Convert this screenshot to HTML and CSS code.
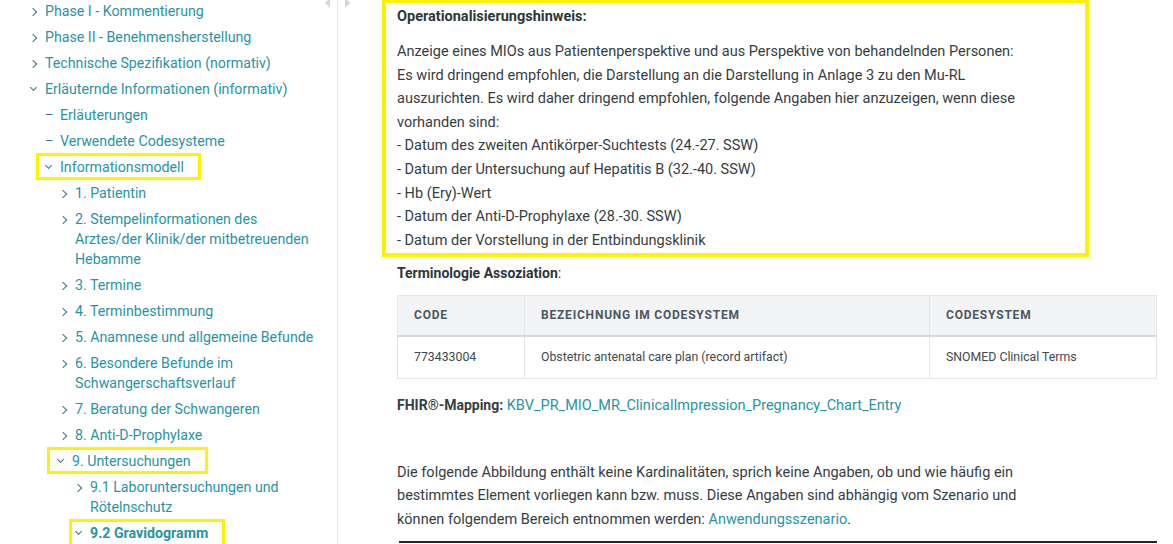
FILE: index.html
```html
<!DOCTYPE html>
<html lang="de">
<head>
    <meta charset="UTF-8">
    <meta name="viewport" content="width=device-width, initial-scale=1.0">
    <title>Gravidogramm</title>
    <link rel="stylesheet" href="styles.css">
</head>
<body>
    <aside class="sidebar">
        <span class="toggle toggle-left"></span>
        <span class="toggle toggle-right"></span>
        <ul class="tree">
            <li><div class="row"><span class="ico chev"></span><a href="#">Phase I - Kommentierung</a></div></li>
            <li><div class="row"><span class="ico chev"></span><a href="#">Phase II - Benehmensherstellung</a></div></li>
            <li><div class="row"><span class="ico chev"></span><a href="#">Technische Spezifikation (normativ)</a></div></li>
            <li>
                <div class="row"><span class="ico chev open"></span><a href="#">Erläuternde Informationen (informativ)</a></div>
                <ul>
                    <li><div class="row"><span class="ico dash">–</span><a href="#">Erläuterungen</a></div></li>
                    <li><div class="row"><span class="ico dash">–</span><a href="#">Verwendete Codesysteme</a></div></li>
                    <li>
                        <div class="row"><span class="mark mark-1"><span class="ico chev open"></span><a href="#">Informationsmodell</a></span></div>
                        <ul>
                            <li><div class="row"><span class="ico chev"></span><a href="#">1. Patientin</a></div></li>
                            <li><div class="row"><span class="ico chev"></span><a href="#">2. Stempelinformationen des Arztes/der Klinik/der mitbetreuenden Hebamme</a></div></li>
                            <li><div class="row"><span class="ico chev"></span><a href="#">3. Termine</a></div></li>
                            <li><div class="row"><span class="ico chev"></span><a href="#">4. Terminbestimmung</a></div></li>
                            <li><div class="row"><span class="ico chev"></span><a href="#">5. Anamnese und allgemeine Befunde</a></div></li>
                            <li><div class="row"><span class="ico chev"></span><a href="#">6. Besondere Befunde im Schwangerschaftsverlauf</a></div></li>
                            <li><div class="row"><span class="ico chev"></span><a href="#">7. Beratung der Schwangeren</a></div></li>
                            <li><div class="row"><span class="ico chev"></span><a href="#">8. Anti-D-Prophylaxe</a></div></li>
                            <li>
                                <div class="row"><span class="mark mark-2"><span class="ico chev open"></span><a href="#">9. Untersuchungen</a></span></div>
                                <ul>
                                    <li><div class="row"><span class="ico chev"></span><a href="#">9.1 Laboruntersuchungen und Rötelnschutz</a></div></li>
                                    <li><div class="row"><span class="mark mark-3"><span class="ico chev open"></span><a href="#" class="current">9.2 Gravidogramm</a></span></div></li>
                                </ul>
                            </li>
                        </ul>
                    </li>
                </ul>
            </li>
        </ul>
    </aside>
    <main class="content">
        <div class="note">
            <p class="note-title">Operationalisierungshinweis:</p>
            <p>Anzeige eines MIOs aus Patientenperspektive und aus Perspektive von behandelnden Personen:<br>
            Es wird dringend empfohlen, die Darstellung an die Darstellung in Anlage 3 zu den Mu-RL auszurichten. Es wird daher dringend empfohlen, folgende Angaben hier anzuzeigen, wenn diese vorhanden sind:<br>
            - Datum des zweiten Antikörper-Suchtests (24.-27. SSW)<br>
            - Datum der Untersuchung auf Hepatitis B (32.-40. SSW)<br>
            - Hb (Ery)-Wert<br>
            - Datum der Anti-D-Prophylaxe (28.-30. SSW)<br>
            - Datum der Vorstellung in der Entbindungsklinik</p>
        </div>
        <p class="label"><strong>Terminologie Assoziation</strong>:</p>
        <table class="codes">
            <thead>
                <tr>
                    <th class="col-code">Code</th>
                    <th class="col-name">Bezeichnung im Codesystem</th>
                    <th>Codesystem</th>
                </tr>
            </thead>
            <tbody>
                <tr>
                    <td>773433004</td>
                    <td>Obstetric antenatal care plan (record artifact)</td>
                    <td>SNOMED Clinical Terms</td>
                </tr>
            </tbody>
        </table>
        <p class="mapping"><strong>FHIR®-Mapping:</strong> <a href="#">KBV_PR_MIO_MR_ClinicalImpression_Pregnancy_Chart_Entry</a></p>
        <p class="intro">Die folgende Abbildung enthält keine Kardinalitäten, sprich keine Angaben, ob und wie häufig ein bestimmtes Element vorliegen kann bzw. muss. Diese Angaben sind abhängig vom Szenario und können folgendem Bereich entnommen werden: <a href="#">Anwendungsszenario</a>.</p>
        <div class="figure"></div>
    </main>
</body>
</html>
```

FILE: styles.css
```css
body {
    margin: 0;
    display: flex;
    height: 544px;
    overflow: hidden;
    font-family: Roboto, 'Open Sans', sans-serif;
    font-size: 14.5px;
    color: #363d42;
    background: #fff;
}
a {
    color: #2894a4;
    text-decoration: none;
}
strong {
    font-size: 14px;
}
.sidebar {
    position: relative;
    width: 337px;
    flex-shrink: 0;
    border-right: 1px solid #e3e3e3;
    font-size: 14.2px;
}
.toggle {
    position: absolute;
    top: -2px;
    width: 0;
    height: 0;
    border-top: 5px solid transparent;
    border-bottom: 5px solid transparent;
}
.toggle-left {
    right: 7px;
    border-right: 5px solid #d6d6d6;
}
.toggle-right {
    right: -13px;
    border-left: 5px solid #d6d6d6;
}
.tree, .tree ul {
    list-style: none;
    margin: 0;
    padding: 0;
}
.tree {
    padding: 1px 0 0 30px;
}
.tree ul {
    padding-left: 15px;
    margin-top: 6px;
}
.tree li {
    margin-bottom: 6px;
}
.tree li:last-child {
    margin-bottom: 0;
}
.row {
    display: flex;
    line-height: 20px;
    padding-right: 14px;
}
.ico {
    flex: 0 0 15px;
    color: #3a7682;
}
.chev::before {
    content: "";
    display: inline-block;
    width: 5px;
    height: 5px;
    border-right: 1.6px solid #3a7682;
    border-bottom: 1.6px solid #3a7682;
    transform: rotate(-45deg);
    margin: 0 0 1px 0;
}
.chev.open::before {
    width: 4px;
    height: 4px;
    transform: rotate(45deg);
    margin: 0 0 4px 1px;
}
.dash {
    font-size: 13px;
}
.mark {
    display: inline-flex;
    border: 3px solid #fff200;
    margin: -4px 0 -3px -9px;
    padding: 1px 14px 0 6px;
}
.mark-2 {
    margin-left: -13px;
    padding-left: 7px;
}
.mark-3 {
    margin: -4px 0 -7px -6px;
    padding: 1px 14px 4px 3px;
}
.current {
    font-weight: 700;
}
.content {
    flex: 1;
    padding: 0 16px 0 59px;
}
.content p {
    margin: 0;
    line-height: 23.6px;
}
.note {
    width: 640px;
    margin: -1px 0 0 -15px;
    padding: 2px 48px 1px 11px;
    border: 4px solid #fff200;
}
.note .note-title {
    font-weight: 700;
    line-height: 24px;
    margin-bottom: 11px;
    color: #2f363b;
}
.content .label {
    margin-top: 5px;
    color: #2f363b;
}
.codes {
    width: 760px;
    margin-top: 9px;
    border-collapse: collapse;
    font-size: 12.3px;
    border: 1px solid #e4e6e8;
}
.codes th {
    background: #f3f4f5;
    color: #4c5761;
    text-align: left;
    text-transform: uppercase;
    letter-spacing: 0.8px;
    font-size: 12px;
    font-weight: 700;
    height: 39px;
    padding: 0 16px;
    border-right: 1px solid #e4e6e8;
    border-bottom: 2px solid #d7d9dc;
}
.codes td {
    height: 41px;
    padding: 0 16px;
    border-right: 1px solid #e4e6e8;
    color: #41484e;
}
.col-code {
    width: 94px;
}
.col-name {
    width: 372px;
}
.content .mapping {
    margin-top: 15px;
}
.content .intro {
    margin-top: 43px;
    width: 640px;
}
.figure {
    margin: 10px 0 0 2px;
    border-top: 2px solid #222;
    width: 758px;
}
```
